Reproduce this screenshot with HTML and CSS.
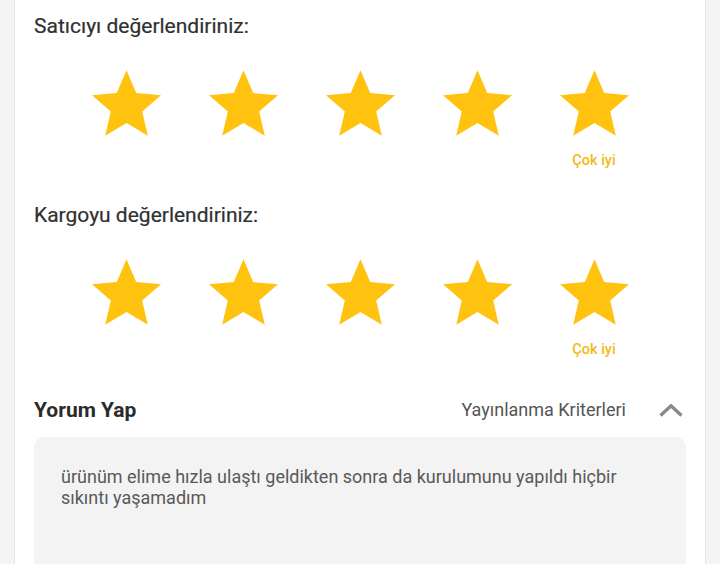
FILE: index.html
```html
<!DOCTYPE html>
<html lang="tr">
<head>
<meta charset="utf-8">
<link rel="stylesheet" href="styles.css">
</head>
<body>
<div class="card">
  <section class="rate">
    <h2 class="rate-title">Satıcıyı değerlendiriniz:</h2>
    <div class="stars">
      <div class="star-col"><svg class="star" viewBox="2 2 20 19"><path d="M12 17.27L18.18 21l-1.64-7.03L22 9.24l-7.19-.61L12 2 9.19 8.63 2 9.24l5.46 4.73L5.82 21z"/></svg></div>
      <div class="star-col"><svg class="star" viewBox="2 2 20 19"><path d="M12 17.27L18.18 21l-1.64-7.03L22 9.24l-7.19-.61L12 2 9.19 8.63 2 9.24l5.46 4.73L5.82 21z"/></svg></div>
      <div class="star-col"><svg class="star" viewBox="2 2 20 19"><path d="M12 17.27L18.18 21l-1.64-7.03L22 9.24l-7.19-.61L12 2 9.19 8.63 2 9.24l5.46 4.73L5.82 21z"/></svg></div>
      <div class="star-col"><svg class="star" viewBox="2 2 20 19"><path d="M12 17.27L18.18 21l-1.64-7.03L22 9.24l-7.19-.61L12 2 9.19 8.63 2 9.24l5.46 4.73L5.82 21z"/></svg></div>
      <div class="star-col"><svg class="star" viewBox="2 2 20 19"><path d="M12 17.27L18.18 21l-1.64-7.03L22 9.24l-7.19-.61L12 2 9.19 8.63 2 9.24l5.46 4.73L5.82 21z"/></svg><span class="star-label">Çok iyi</span></div>
    </div>
  </section>
  <section class="rate">
    <h2 class="rate-title">Kargoyu değerlendiriniz:</h2>
    <div class="stars">
      <div class="star-col"><svg class="star" viewBox="2 2 20 19"><path d="M12 17.27L18.18 21l-1.64-7.03L22 9.24l-7.19-.61L12 2 9.19 8.63 2 9.24l5.46 4.73L5.82 21z"/></svg></div>
      <div class="star-col"><svg class="star" viewBox="2 2 20 19"><path d="M12 17.27L18.18 21l-1.64-7.03L22 9.24l-7.19-.61L12 2 9.19 8.63 2 9.24l5.46 4.73L5.82 21z"/></svg></div>
      <div class="star-col"><svg class="star" viewBox="2 2 20 19"><path d="M12 17.27L18.18 21l-1.64-7.03L22 9.24l-7.19-.61L12 2 9.19 8.63 2 9.24l5.46 4.73L5.82 21z"/></svg></div>
      <div class="star-col"><svg class="star" viewBox="2 2 20 19"><path d="M12 17.27L18.18 21l-1.64-7.03L22 9.24l-7.19-.61L12 2 9.19 8.63 2 9.24l5.46 4.73L5.82 21z"/></svg></div>
      <div class="star-col"><svg class="star" viewBox="2 2 20 19"><path d="M12 17.27L18.18 21l-1.64-7.03L22 9.24l-7.19-.61L12 2 9.19 8.63 2 9.24l5.46 4.73L5.82 21z"/></svg><span class="star-label">Çok iyi</span></div>
    </div>
  </section>
  <div class="comment-head">
    <h2 class="comment-title">Yorum Yap</h2>
    <div class="criteria">
      <span class="criteria-text">Yayınlanma Kriterleri</span>
      <svg class="chevron" viewBox="0 0 24 13"><polyline points="1.5,11.5 12,1.8 22.5,11.5"/></svg>
    </div>
  </div>
  <div class="comment-box">ürünüm elime hızla ulaştı geldikten sonra da kurulumunu yapıldı hiçbir sıkıntı yaşamadım</div>
</div>
</body>
</html>
```

FILE: styles.css
```css
html, body {
  margin: 0;
  padding: 0;
}
body {
  background: #f4f4f4;
  font-family: Roboto, "Noto Sans", sans-serif;
  height: 564px;
  overflow: hidden;
}
.card {
  margin: 0 14px 0 14px;
  background: #fff;
  border-left: 1px solid #e6e6e6;
  border-right: 1px solid #e6e6e6;
  padding: 14px 19px 0 19px;
  min-height: 600px;
}
.rate {
  margin-bottom: 34px;
}
.rate-title {
  margin: 0;
  font-size: 21px;
  line-height: 24px;
  font-weight: 400;
  color: #303030;
  -webkit-text-stroke: 0.2px #303030;
}
.stars {
  display: grid;
  grid-template-columns: repeat(5, 117px);
  justify-content: center;
  margin-top: 32px;
  height: 99px;
}
.star-col {
  display: flex;
  flex-direction: column;
  align-items: center;
}
.star {
  width: 69px;
  height: 66px;
  display: block;
  fill: #ffc20e;
}
.star-label {
  margin-top: 16px;
  font-size: 14.5px;
  line-height: 17px;
  font-weight: 500;
  color: #f2bb16;
}
.comment-head {
  display: flex;
  justify-content: space-between;
  align-items: center;
  margin-top: 40px;
  height: 24px;
}
.comment-title {
  margin: 0;
  font-size: 21px;
  line-height: 24px;
  font-weight: 700;
  color: #2b2b2b;
}
.criteria {
  display: flex;
  align-items: center;
  gap: 33px;
  padding-right: 3px;
}
.criteria-text {
  font-size: 18px;
  line-height: 24px;
  color: #555;
}
.chevron {
  width: 24px;
  height: 13px;
  display: block;
  fill: none;
  stroke: #8a8a8a;
  stroke-width: 3.4;
  stroke-linecap: butt;
}
.comment-box {
  margin-top: 15px;
  background: #f3f3f3;
  border-radius: 10px;
  height: 160px;
  padding: 29px 30px 0 27px;
  font-size: 18px;
  line-height: 21px;
  color: #595959;
}
```
